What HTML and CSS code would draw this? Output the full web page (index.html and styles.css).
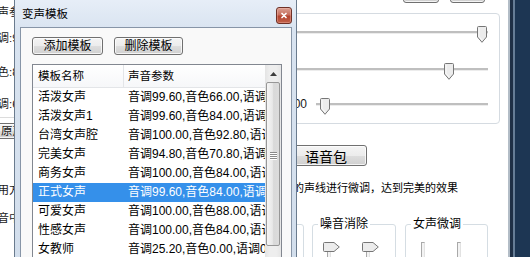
FILE: index.html
```html
<!DOCTYPE html>
<html lang="zh">
<head>
<meta charset="utf-8">
<title>变声模板</title>
<link rel="stylesheet" href="styles.css">
</head>
<body>
<div class="screen">
  <div class="app">
    <div class="left-col">
      <div class="ltext t1">变声参数</div>
      <div class="ltext t2">音调:99.60</div>
      <div class="ltext t3">音色:84.00</div>
      <div class="ltext t4">语调:61.00</div>
      <div class="lrule"></div>
      <div class="btn lbtn">原声试听</div>
      <div class="ltext t5">使用方法</div>
      <div class="ltext t6">语音中</div>
    </div>

    <div class="right-col">
      <div class="top-btns">
        <div class="btn tb tb1"></div>
        <div class="btn tb tb2"></div>
      </div>
      <div class="panel">
        <div class="srow r1">
          <div class="slider">
            <div class="track"></div>
            <svg class="thumb" style="left:196px" width="10" height="17" viewBox="0 0 10 17"><path d="M1.5.5h7a1 1 0 0 1 1 1V11L5 16.3.5 11V1.5a1 1 0 0 1 1-1z" fill="#ececec" stroke="#767676"/><path d="M2 2v8.6l3 3.3" fill="none" stroke="#fff" stroke-opacity=".8"/></svg>
          </div>
        </div>
        <div class="srow r2">
          <div class="slider">
            <div class="track"></div>
            <svg class="thumb" style="left:163px" width="10" height="17" viewBox="0 0 10 17"><path d="M1.5.5h7a1 1 0 0 1 1 1V11L5 16.3.5 11V1.5a1 1 0 0 1 1-1z" fill="#ececec" stroke="#767676"/><path d="M2 2v8.6l3 3.3" fill="none" stroke="#fff" stroke-opacity=".8"/></svg>
          </div>
        </div>
        <div class="srow r3">
          <div class="val">1.00</div>
          <div class="slider">
            <div class="track"></div>
            <svg class="thumb" style="left:4px" width="10" height="17" viewBox="0 0 10 17"><path d="M1.5.5h7a1 1 0 0 1 1 1V11L5 16.3.5 11V1.5a1 1 0 0 1 1-1z" fill="#ececec" stroke="#767676"/><path d="M2 2v8.6l3 3.3" fill="none" stroke="#fff" stroke-opacity=".8"/></svg>
          </div>
        </div>
      </div>
      <div class="btn voice">语音包</div>
      <div class="desc">的声线进行微调，达到完美的效果</div>
      <div class="groups">
        <fieldset class="grp g0"><legend>男声</legend></fieldset>
        <fieldset class="grp g1">
          <legend>噪音消除</legend>
          <div class="vsl">
            <div class="vs"><div class="vtrack"></div><svg class="vthumb" width="17" height="10" viewBox="0 0 17 10"><path d="M.5 1.5a1 1 0 0 1 1-1H11l5.3 4.5L11 9.5H1.5a1 1 0 0 1-1-1z" fill="#ececec" stroke="#767676"/></svg></div>
            <div class="vs"><div class="vtrack"></div><svg class="vthumb" width="17" height="10" viewBox="0 0 17 10"><path d="M.5 1.5a1 1 0 0 1 1-1H11l5.3 4.5L11 9.5H1.5a1 1 0 0 1-1-1z" fill="#ececec" stroke="#767676"/></svg></div>
          </div>
        </fieldset>
        <fieldset class="grp g2">
          <legend>女声微调</legend>
          <div class="vsl vsl2">
            <div class="vs"><div class="vtrack"></div></div>
            <div class="vs"><div class="vtrack"></div></div>
          </div>
        </fieldset>
      </div>
    </div>

    <div class="edge"></div>
  </div>

  <div class="dialog">
    <div class="titlebar">
      <span class="title">变声模板</span>
      <div class="close"><svg width="14" height="15" viewBox="0 0 14 15"><path d="M5 5.5l4 4M9 5.5l-4 4" stroke="#fff" stroke-width="1.7" stroke-linecap="round"/></svg></div>
    </div>
    <div class="client">
      <div class="btnrow">
        <div class="btn dbtn add">添加模板</div>
        <div class="btn dbtn del">删除模板</div>
      </div>
      <div class="list">
        <div class="list-body">
          <div class="lhead"><div class="c1">模板名称</div><div class="c2">声音参数</div></div>
          <div class="lrow"><div class="c1">活泼女声</div><div class="c2">音调99.60,音色66.00,语调61.00</div></div>
          <div class="lrow"><div class="c1">活泼女声1</div><div class="c2">音调99.60,音色84.00,语调61.00</div></div>
          <div class="lrow"><div class="c1">台湾女声腔</div><div class="c2">音调100.00,音色92.80,语调61.00</div></div>
          <div class="lrow"><div class="c1">完美女声</div><div class="c2">音调94.80,音色70.80,语调61.00</div></div>
          <div class="lrow"><div class="c1">商务女声</div><div class="c2">音调100.00,音色84.00,语调100.00</div></div>
          <div class="lrow sel"><div class="c1">正式女声</div><div class="c2">音调99.60,音色84.00,语调61.00</div></div>
          <div class="lrow"><div class="c1">可爱女声</div><div class="c2">音调100.00,音色88.00,语调100.00</div></div>
          <div class="lrow"><div class="c1">性感女声</div><div class="c2">音调100.00,音色84.00,语调100.00</div></div>
          <div class="lrow"><div class="c1">女教师</div><div class="c2">音调25.20,音色0.00,语调0.00</div></div>
        </div>
        <div class="vscroll">
          <div class="sb-up"><svg width="7" height="4" viewBox="0 0 7 4"><path d="M0 4L3.5 0 7 4z" fill="#3c3c3c"/></svg></div>
          <div class="sb-thumb"><svg class="grip" width="7" height="8" viewBox="0 0 7 8"><path d="M0 .5h7M0 2.5h7M0 4.5h7M0 6.5h7" stroke="#8a8a8a"/><path d="M0 1.5h7M0 3.5h7M0 5.5h7M0 7.5h7" stroke="#fff"/></svg></div>
        </div>
      </div>
    </div>
  </div>
</div>
</body>
</html>
```

FILE: styles.css
```css
* { box-sizing: border-box; }
html, body { margin: 0; padding: 0; }
body {
  font-family: "Liberation Sans", "Noto Sans CJK SC", sans-serif;
  font-size: 12px;
  color: #000;
  background: #fff;
}
.screen {
  position: relative;
  width: 530px;
  height: 257px;
  overflow: hidden;
  background: #fff;
}

/* ---------- background application ---------- */
.app {
  display: grid;
  grid-template-columns: 290px 232px 22px;
  margin-left: -14px;
  height: 257px;
}
.left-col {
  display: flex;
  flex-direction: column;
  align-items: flex-start;
  font-size: 11.5px;
  line-height: 16px;
  color: #1a1a1a;
}
.ltext { white-space: nowrap; }
.t1 { margin-top: 4px; }
.t2 { margin-top: 10px; }
.t3 { margin-top: 18px; }
.t4 { margin-top: 16px; }
.lrule { margin-top: 5px; width: 100%; height: 1px; background: #dcdcdc; }
.t5 { margin-top: 43px; }
.t6 { margin-top: 12px; }

.btn {
  display: flex;
  align-items: center;
  justify-content: center;
  border: 1px solid #707070;
  border-radius: 3px;
  background: linear-gradient(#f4f4f4 0%, #ececec 50%, #dedede 50%, #d0d0d0 100%);
  box-shadow: inset 0 0 0 1px rgba(255,255,255,.75);
  white-space: nowrap;
}
.lbtn {
  margin-top: 5px;
  width: 76px;
  height: 16px;
  font-size: 11.5px;
  line-height: 14px;
}

.right-col {
  display: flex;
  flex-direction: column;
  align-items: flex-start;
}
.top-btns {
  display: flex;
  gap: 11px;
  align-self: flex-end;
  margin-right: 23px;
  margin-top: -21px;
}
.tb { height: 24px; }
.tb1 { width: 36px; }
.tb2 { width: 35px; }

.panel {
  margin: 10px 0 0 4px;
  width: 220px;
  height: 111px;
  border: 1px solid #d5dbe1;
  border-radius: 4px;
  padding: 12px 11px 0 0;
  display: flex;
  flex-direction: column;
}
.srow { display: flex; align-items: flex-start; height: 17px; }
.r2 { margin-top: 20px; }
.r3 { margin-top: 18px; }
.val {
  width: 25px;
  margin: 0 9px 0 1px;
  text-align: right;
  line-height: 12px;
  color: #1a1a1a;
}
.slider { position: relative; flex: 1; height: 17px; }
.track {
  position: absolute;
  left: 0;
  right: 0;
  top: 5px;
  height: 3px;
  background: #bfbfbf;
  border-bottom: 1px solid #ececec;
}
.thumb { position: absolute; top: 0; }

.voice {
  margin: 21px 0 0 9px;
  width: 82px;
  height: 21px;
  font-size: 14px;
}
.desc {
  margin: 14px 0 0 17px;
  font-size: 11px;
  line-height: 16px;
  white-space: nowrap;
}
.groups {
  display: flex;
  margin: 20px 0 0 -26px;
}
.grp {
  margin: 0;
  padding: 10px 0 0 0;
  min-width: 0;
  height: 60px;
  border: 1px solid #d5dde3;
  border-radius: 3px;
}
.grp legend {
  margin-left: 5px;
  padding: 0 2px;
  font-size: 12px;
  line-height: 16px;
}
.g0 { width: 54px; }
.g1 { width: 84px; margin-left: 8px; }
.g2 { width: 83px; margin-left: 9px; }
.vsl { display: flex; gap: 22px; padding-left: 10px; }
.vsl2 { gap: 19px; padding-left: 11px; }
.vs { position: relative; width: 17px; height: 30px; }
.vtrack {
  position: absolute;
  left: 4px;
  top: 0;
  bottom: 0;
  width: 4px;
  border-left: 1px solid #a9a9a9;
  border-top: 1px solid #a9a9a9;
  border-right: 1px solid #e2e2e2;
  background: #f3f3f3;
}
.vthumb { position: absolute; left: 0; top: 0; }

.edge {
  background: linear-gradient(to right,
    #b3bdc7 0, #b3bdc7 2px,
    #1f3046 2px, #1f3046 5px,
    #667d96 5px, #667d96 7px,
    #1d3653 7px);
}

/* ---------- dialog window ---------- */
.dialog {
  position: absolute;
  left: 14px;
  top: -5px;
  width: 283px;
  height: 275px;
  border: 1px solid #6a7b8e;
  background: linear-gradient(#e8eff8, #d8e3f0 36px, #d2deec);
  display: flex;
  flex-direction: column;
}
.titlebar {
  height: 31px;
  display: flex;
  align-items: flex-start;
  padding: 10px 4px 0 7px;
}
.title { font-size: 11.5px; line-height: 16px; color: #000; }
.close {
  margin-left: auto;
  margin-top: 1px;
  width: 16px;
  height: 17px;
  border: 1px solid #6e3127;
  border-radius: 3px;
  background: linear-gradient(#d99f92 0%, #c8705e 45%, #b5442f 55%, #c0614a 100%);
  box-shadow: inset 0 0 0 1px rgba(255,200,190,.35);
  display: flex;
  align-items: center;
  justify-content: center;
}
.client {
  flex: 1;
  margin: 0 4px 0 5px;
  border: 1px solid #8795a7;
  background: #f9f9f9;
  padding: 9px 0 0 11px;
}
.btnrow { display: flex; gap: 11px; }
.dbtn { height: 18px; font-size: 12px; line-height: 16px; }
.add { width: 71px; }
.del { width: 69px; }

.list {
  margin-top: 9px;
  width: 250px;
  height: 200px;
  border: 1px solid #828790;
  background: #fff;
  display: flex;
}
.list-body { width: 232px; overflow: hidden; }
.lhead {
  display: flex;
  height: 23px;
  line-height: 22px;
  font-size: 11.5px;
  border-bottom: 1px solid #e3e5e8;
  background: linear-gradient(#ffffff, #f6f7f9);
}
.lhead .c1 { border-right: 1px solid #e3e5e8; }
.c1 {
  width: 91px;
  flex: none;
  padding-left: 5px;
  white-space: nowrap;
  overflow: hidden;
}
.c2 {
  flex: 1;
  min-width: 0;
  padding-left: 4px;
  white-space: nowrap;
  overflow: hidden;
}
.lrow { display: flex; height: 19px; line-height: 19px; }
.lrow.sel { background: #3590ea; color: #fff; }

.vscroll {
  width: 16px;
  background: linear-gradient(to right, #e4e4e4, #eeeeee 30%, #eeeeee 70%, #e6e6e6);
  display: flex;
  flex-direction: column;
}
.sb-up {
  height: 17px;
  display: flex;
  align-items: center;
  justify-content: center;
  flex: none;
}
.sb-thumb {
  margin: 0 1px;
  height: 164px;
  flex: none;
  border: 1px solid #979797;
  border-radius: 2px;
  background: linear-gradient(to right, #f6f6f6, #e8e8e8 45%, #d9d9d9 55%, #dcdcdc);
  display: flex;
  align-items: center;
  justify-content: center;
}
.grip { margin-bottom: 16px; }
```
